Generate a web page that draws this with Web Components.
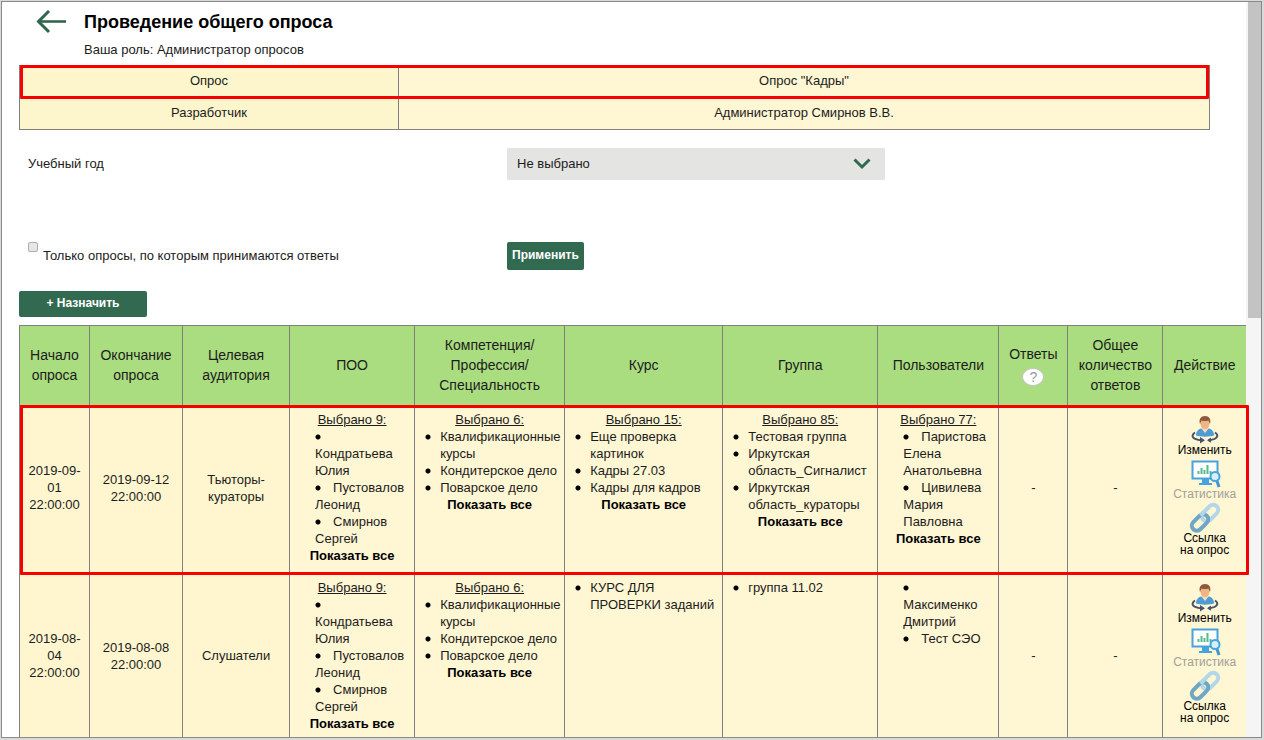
<!DOCTYPE html>
<html lang="ru">
<head>
<meta charset="utf-8">
<title>Проведение общего опроса</title>
<style>
  body { margin: 0; font: 13px/17px "Liberation Sans", Arial, sans-serif; color: #1c1c1c; background: #fff; }
</style>
</head>
<body>
<survey-frame>
  <page-header heading="Проведение общего опроса">Ваша роль: Администратор опросов</page-header>
  <survey-info></survey-info>
  <survey-filter></survey-filter>
  <assign-bar></assign-bar>
  <survey-table></survey-table>
</survey-frame>

<script>
const define = (name, html, setup) => {
  const template = document.createElement('template');
  template.innerHTML = '<style>*{box-sizing:border-box}:host{display:block}</style>' + html;
  customElements.define(name, class extends HTMLElement {
    connectedCallback() {
      if (this.shadowRoot) return;
      const root = this.attachShadow({ mode: 'open' });
      root.append(template.content.cloneNode(true));
      if (setup) setup(this, root);
    }
  });
};

define('scroll-rail', `
<style>
  :host { flex: none; width: 15px; background: #f5f5f5; padding: 0 0 0 2px; }
  div { height: 43%; background: #c3c3c3; }
</style>
<div></div>`);

define('survey-frame', `
<style>
  :host { display: flex; height: 100vh; box-sizing: border-box; overflow: hidden; padding: 1px 2px 2px 1px; background: #d9d9d9; }
  .inner { flex: 1; min-width: 0; display: flex; overflow: hidden; border: 1px solid #8a8a8a; background: #fff; }
  main { flex: 1; min-width: 0; position: relative; z-index: 1; padding: 8px 0 0 17px; }
</style>
<div class="inner"><main><slot></slot></main><scroll-rail></scroll-rail></div>`);

define('page-header', `
<style>
  :host { display: flex; gap: 17px; padding-left: 17px; height: 55px; }
  a { display: block; width: 31px; height: 24px; }
  svg { display: block; }
  h1 { margin: 0; font-size: 18px; line-height: 24px; color: #000; }
  p { margin: 7px 0 0; }
</style>
<a href="#" aria-label="Назад"><svg width="31" height="24" viewBox="0 0 31 24" fill="none" stroke="#2f664d" stroke-width="2.6"><path d="M30 11.500H3"/><path d="M13 1 2.500 11.500 13 22" stroke-width="3"/></svg></a>
<div><h1></h1><p><slot></slot></p></div>`,
(host, root) => { root.querySelector('h1').textContent = host.getAttribute('heading'); });

define('survey-info', `
<style>
  :host { margin-right: 36px; }
  table { width: 100%; table-layout: fixed; border-collapse: collapse; text-align: center; background: #fff6d3; }
  th, td { border: 1px solid #808080; font-weight: normal; height: 32px; padding: 0 5px 2px; }
  th { width: 379px; background: #fdf6cc; }
  .marked { position: relative; z-index: 1; }
  .mark { position: absolute; inset: -1px 1px -1px 0; border: 3px solid #f80000; border-radius: 1px; pointer-events: none; }
</style>
<table>
  <tr class="marked"><th scope="row">Опрос<i class="mark"></i></th><td>Опрос "Кадры"</td></tr>
  <tr><th scope="row">Разработчик</th><td>Администратор Смирнов В.В.</td></tr>
</table>`);

define('survey-filter', `
<style>
  form { display: grid; grid-template-columns: 479px minmax(0, 378px); padding: 18px 0 0 9px; row-gap: 62px; align-items: center; margin: 0; }
  .year { padding-bottom: 2px; }
  .pick { position: relative; }
  select { appearance: none; display: block; width: 100%; height: 32px; border: 0; border-radius: 0; background: #e4e4e2; font: inherit; color: inherit; padding: 0 40px 2px 10px; }
  svg { position: absolute; right: 14px; top: 10px; pointer-events: none; }
  .only { display: flex; gap: 5px; align-items: flex-start; align-self: start; }
  input { appearance: none; flex: none; width: 10px; height: 10px; margin: 0; border: 1px solid #adadad; border-radius: 2px; background: #e6e6e6; }
  .only label { padding-top: 5px; }
  button { justify-self: start; height: 28px; padding: 0 5px 2px; border: 0; border-radius: 2px; background: #316a50; color: #fff; font: inherit; font-size: 12px; font-weight: bold; }
</style>
<form>
  <label class="year" for="year">Учебный год</label>
  <div class="pick">
    <select id="year"><option>Не выбрано</option></select>
    <svg width="18" height="12" viewBox="0 0 18 12" fill="none" stroke="#2f6b4f" stroke-width="3"><path d="m1.500 1.500 7.500 7.500 7.500-7.500"/></svg>
  </div>
  <div class="only"><input type="checkbox" id="only"><label for="only">Только опросы, по которым принимаются ответы</label></div>
  <button type="button">Применить</button>
</form>`);

define('assign-bar', `
<style>
  :host { padding: 21px 0 8px; }
  button { display: block; width: 128px; height: 26px; padding: 0 0 1px; border: 0; border-radius: 2px; background: #316a50; color: #fff; font: inherit; font-size: 12px; font-weight: bold; }
</style>
<button type="button">+ Назначить</button>`);

define('picked-list', `
<style>
  :host { text-align: center; }
  u, b { display: block; }
  b { color: #000; }
  ul { margin: 0 0 0 20px; padding: 0; text-align: left; list-style: none; }
  li { position: relative; }
  li::before { content: ""; display: inline-block; width: 18px; height: 8px; background: radial-gradient(circle at 3px 4px, #000 2px, transparent 3px); }
  :host([outside]) li::before { position: absolute; left: -15px; top: 5px; }
</style>
<u></u><ul></ul><b></b>`,
(host, root) => {
  const count = host.getAttribute('count');
  if (count) {
    root.querySelector('u').textContent = 'Выбрано ' + count + ':';
    root.querySelector('b').textContent = 'Показать все';
  } else {
    root.querySelector('u').remove();
    root.querySelector('b').remove();
  }
  for (const name of host.getAttribute('items').split('|')) {
    const li = document.createElement('li');
    li.textContent = name;
    root.querySelector('ul').append(li);
  }
});

const icons = {
  person: `<path d="M4 16.500C-1 20 2 23.500 10 24.300M24 16.500c5 3.500 1.500 7-6.500 7.800" fill="none" stroke="#46536a" stroke-width="2"/>
    <path d="m9 21 5 3.300-5 3.200zM20 21.500l-4 2.700 4 2.600z" fill="#46536a"/>
    <path d="M5 19.500c0-5 3-7.500 9-7.500s9 2.500 9 7.500c-5 1.500-13 1.500-18 0z" fill="#4f9bd3"/><path d="m10 12 4 5 4-5z" fill="#f4dcc0"/>
    <ellipse cx="14" cy="7.500" rx="4.500" ry="5.500" fill="#efb583"/><path d="M9 8C7.500 3 10 0 14 0s6.500 3 5 8l-1.500-3.500c-2 .7-5 .7-7 0z" fill="#8d5a3b"/>`,
  stats: `<path d="M1.500 1.500h25v17h-25z" fill="#fff" stroke="#46a3dc" stroke-width="2"/><path d="M11 19h7v4h3v2H8v-2h3z" fill="#46a3dc"/>
    <path d="M7.500 14v-3M10.500 14V8M13.500 14v-4M16.500 14V5M19.500 14v-3" stroke="#52bd8b" stroke-width="2"/>
    <path d="m26 21 2 6" stroke="#3b97d3" stroke-width="3"/><circle cx="24" cy="16.500" r="4.500" fill="#d8f0fa" stroke="#46a3dc" stroke-width="2"/>`,
  link: `<g fill="none" stroke-width="4"><rect x="-9.500" y="-5" width="19" height="10" rx="5" transform="translate(19 9) rotate(-45)" stroke="#b3d7e8"/>
    <rect x="-9.500" y="-5" width="19" height="10" rx="5" transform="translate(9 18.500) rotate(-45)" stroke="#6fa6c3"/><path d="m9.500 11.500 4-4" stroke="#b3d7e8"/></g>`
};

define('action-link', `
<style>
  a { display: flex; flex-direction: column; align-items: center; color: #000; text-decoration: none; font-size: 12px; line-height: 12px; padding-bottom: 4px; }
  :host([muted]) a { color: #a3a099; }
  svg { display: block; overflow: visible; }
</style>
<a href="#"><svg width="28" height="28" viewBox="0 0 28 28" aria-hidden="true"></svg><slot></slot></a>`,
(host, root) => { root.querySelector('svg').innerHTML = icons[host.getAttribute('icon')]; });

define('help-button', `
<style>
  button { display: block; margin: 4px auto 0; width: 22px; height: 18px; padding: 0; border: 1px solid #c4c4c4; border-radius: 50%; background: #fff; color: #999; font: inherit; line-height: 16px; }
</style>
<button type="button" aria-label="Справка">?</button>`);

const actions = `<action-link icon="person">Изменить</action-link><action-link icon="stats" muted>Статистика</action-link><action-link icon="link"><span>Ссылка<br>на опрос</span></action-link>`;
const people = `<picked-list count="9" items="Кондратьева Юлия|Пустовалов Леонид|Смирнов Сергей"></picked-list>`;
const skills = `<picked-list outside count="6" items="Квалификационные курсы|Кондитерское дело|Поварское дело"></picked-list>`;

define('survey-table', `
<style>
  table { width: 100%; table-layout: fixed; border-collapse: collapse; background: #fff6d3; text-align: center; }
  th, td { border: 1px solid #808080; padding: 5px 5px 9px; }
  th:last-child, td:last-child { border-right: 0; }
  th { height: 80px; padding: 0 5px 1px; background: #aadc80; font-size: 14px; font-weight: normal; line-height: 20px; }
  td:nth-child(-n+3) { background: #fff6cf; }
  td.list { vertical-align: top; }
  td:last-child { padding: 4px 5px 8px; }
  tbody tr { height: 168px; }
  .marked { position: relative; z-index: 1; }
  .mark { position: absolute; inset: -1px -3px -1px 0; border: 3px solid #f80000; border-radius: 1px; pointer-events: none; }
</style>
<table>
  <colgroup>
    <col style="width:70px"><col style="width:93px"><col style="width:107px"><col style="width:125px"><col style="width:150px"><col style="width:158px"><col style="width:155px"><col style="width:121px"><col style="width:69px"><col style="width:95px"><col style="width:83px">
  </colgroup>
  <thead><tr>
    <th>Начало опроса</th><th>Окончание опроса</th><th>Целевая аудитория</th><th>ПОО</th><th>Компетенция/<br>Профессия/<br>Специальность</th><th>Курс</th><th>Группа</th><th>Пользователи</th><th>Ответы<help-button></help-button></th><th>Общее количество ответов</th><th>Действие</th>
  </tr></thead>
  <tbody>
    <tr class="marked">
      <td>2019-09-01 22:00:00<i class="mark"></i></td><td>2019-09-12 22:00:00</td><td>Тьюторы-кураторы</td>
      <td class="list">${people}</td><td class="list">${skills}</td>
      <td class="list"><picked-list outside count="15" items="Еще проверка картинок|Кадры 27.03|Кадры для кадров"></picked-list></td>
      <td class="list"><picked-list outside count="85" items="Тестовая группа|Иркутская область_Сигналист|Иркутская область_кураторы"></picked-list></td>
      <td class="list"><picked-list count="77" items="Паристова Елена Анатольевна|Цивилева Мария Павловна"></picked-list></td>
      <td>-</td><td>-</td><td>${actions}</td>
    </tr>
    <tr>
      <td>2019-08-04 22:00:00</td><td>2019-08-08 22:00:00</td><td>Слушатели</td>
      <td class="list">${people}</td><td class="list">${skills}</td>
      <td class="list"><picked-list outside items="КУРС ДЛЯ ПРОВЕРКИ заданий"></picked-list></td>
      <td class="list"><picked-list outside items="группа 11.02"></picked-list></td>
      <td class="list"><picked-list items="Максименко Дмитрий|Тест СЭО"></picked-list></td>
      <td>-</td><td>-</td><td>${actions}</td>
    </tr>
  </tbody>
</table>`);
</script>
</body>
</html>
